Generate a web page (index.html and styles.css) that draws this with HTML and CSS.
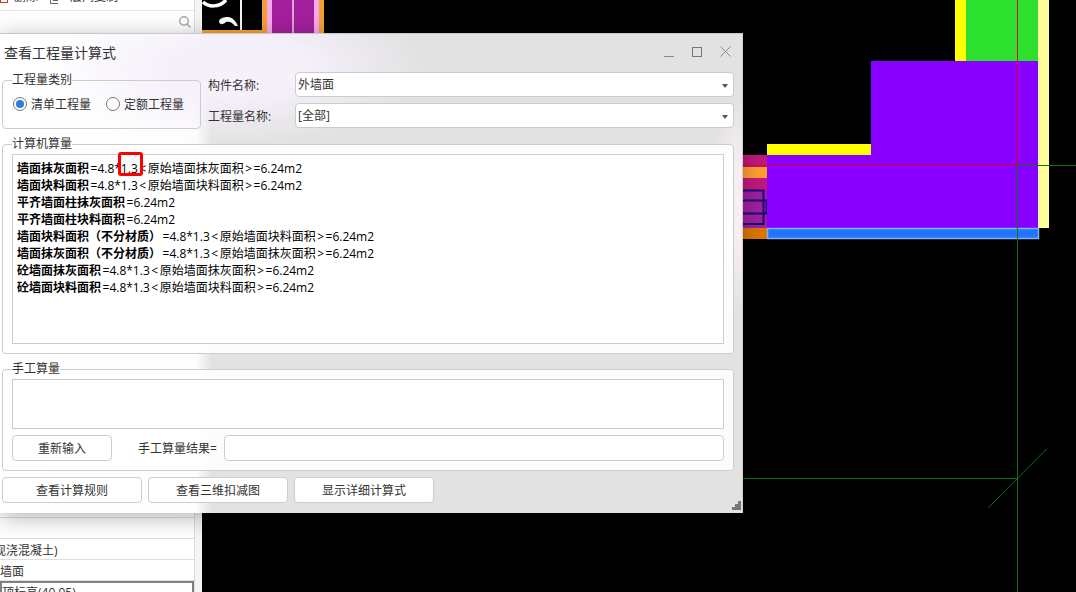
FILE: index.html
```html
<!DOCTYPE html>
<html lang="zh-CN">
<head>
    <meta charset="UTF-8">
    <title>查看工程量计算式</title>
    <link rel="stylesheet" href="styles.css">
</head>
<body>

<div class="app">
    <aside class="sidebar">
        <div class="toolbar">
            <svg class="tool-icon" width="9" height="9" viewBox="0 0 9 9" fill="none" stroke="#c0392b"><rect x="0.5" y="-5.5" width="7" height="8"/></svg>
            <span class="tool-text">删除</span>
            <svg class="tool-icon tool-icon-copy" width="9" height="9" viewBox="0 0 9 9" fill="none" stroke="#666"><path d="M0.5 -4V3.5H8M3 -5V0.5H8"/></svg>
            <span class="tool-text tool-text-copy">层间复制</span>
        </div>
        <div class="search">
            <svg width="14" height="14" viewBox="0 0 14 14" fill="none" stroke="#aaa" stroke-width="1.5">
                <circle cx="6" cy="6" r="4.2"/>
                <path d="M9.2 9.2L12.5 12.5"/>
            </svg>
        </div>
        <div class="side-spacer"></div>
        <div class="side-row side-row-blank"></div>
        <div class="side-row side-row-clip">现浇混凝土)</div>
        <div class="side-row">墙面</div>
        <div class="side-row side-row-active">顶标高(40.05)</div>
    </aside>

    <main class="canvas">
        <svg class="drawing" width="874" height="592" viewBox="202 0 874 592">
            <!-- top left bits -->
            <path d="M203 2C208 7 219 8 226 0" fill="none" stroke="#fff" stroke-width="3.5"/>
            <path d="M219 21C220 18 224 17 228 17C232 17 236 21 238 26L235 26C232 22 229 21 226 22C223 25 219 25 219 21Z" fill="#fff"/>
            <rect x="240" y="0" width="2" height="33" fill="#f4f4f4"/>
            <rect x="202" y="30" width="65" height="3" fill="#f4a030"/>
            <rect x="262" y="0" width="5" height="33" fill="#f4a030"/>
            <rect x="267" y="0" width="5" height="33" fill="#f8a8f0"/>
            <rect x="272" y="0" width="20" height="33" fill="#a31f9c"/>
            <rect x="292" y="0" width="2" height="33" fill="#e0a0d8"/>
            <rect x="294" y="0" width="20" height="33" fill="#a31f9c"/>
            <rect x="314" y="0" width="5" height="33" fill="#f8a8f0"/>
            <rect x="319" y="0" width="5" height="33" fill="#f4a030"/>

            <!-- wall stub beside the dialog -->
            <rect x="743" y="155" width="24" height="12" fill="#c0187f"/>
            <rect x="743" y="167" width="24" height="11" fill="#ffa030"/>
            <rect x="743" y="178" width="24" height="12" fill="#c0187f"/>
            <rect x="743" y="190" width="24" height="38" fill="#a020a0"/>
            <rect x="743" y="228" width="24" height="11" fill="#dd7700"/>
            <rect x="738" y="190.5" width="25.5" height="33.5" fill="none" stroke="#180a78" stroke-width="2"/>
            <rect x="738" y="200.5" width="28.5" height="13" fill="none" stroke="#180a78" stroke-width="2"/>

            <!-- walls -->
            <rect x="955" y="0" width="11" height="61" fill="#ffff00"/>
            <rect x="966" y="0" width="72" height="61" fill="#2ee02e"/>
            <rect x="1038" y="0" width="11" height="228" fill="#ffff99"/>
            <rect x="767" y="144" width="104" height="11" fill="#ffff00"/>
            <path d="M871 61H1038V228H767V155H871Z" fill="#8800ff"/>
            <rect x="767.5" y="228.5" width="271" height="10" fill="#2176ff" stroke="#86b0f2" stroke-width="1.5"/>

            <!-- axes -->
            <path d="M743 165.5H1017.5V0" fill="none" stroke="#e6002e"/>
            <path d="M1017.5 165V592M1017 165.5H1076" fill="none" stroke="#107010"/>
            <path d="M743 478.5H1017" fill="none" stroke="#0a700a" stroke-width="1.2"/>
            <path d="M988.5 507.5L1047 448.5" fill="none" stroke="#107010"/>
        </svg>
    </main>

    <section class="dialog">
        <header class="dialog-head">
            <h1 class="dialog-title">查看工程量计算式</h1>
            <div class="win-btns">
                <svg width="12" height="12" viewBox="0 0 12 12" stroke="#8a8a8a" fill="none"><path d="M0 10.5H10"/></svg>
                <svg width="12" height="12" viewBox="0 0 12 12" stroke="#777" fill="none"><rect x="0.5" y="1.5" width="9" height="9"/></svg>
                <svg width="12" height="12" viewBox="0 0 12 12" stroke="#8a8a8a" fill="none"><path d="M0.5 0.5L10.5 10.5M10.5 0.5L0.5 10.5"/></svg>
            </div>
        </header>

        <div class="top-row">
            <fieldset class="group group-type">
                <legend>工程量类别</legend>
                <div class="radios">
                    <span class="radio radio-on"></span><span class="radio-text">清单工程量</span>
                    <span class="radio radio-second"></span><span class="radio-text">定额工程量</span>
                </div>
            </fieldset>
            <div class="fields">
                <div class="field">
                    <label class="field-label">构件名称:</label>
                    <div class="combo">外墙面</div>
                </div>
                <div class="field">
                    <label class="field-label">工程量名称:</label>
                    <div class="combo">[全部]</div>
                </div>
            </div>
        </div>

        <fieldset class="group group-calc">
            <legend>计算机算量</legend>
            <div class="formula-box">
                <p><b>墙面抹灰面积</b>=4.8*1.3<i class="op">&lt;</i>原始墙面抹灰面积<i class="op">&gt;</i>=6.24m2</p>
                <p><b>墙面块料面积</b>=4.8*1.3<i class="op">&lt;</i>原始墙面块料面积<i class="op">&gt;</i>=6.24m2</p>
                <p><b>平齐墙面柱抹灰面积</b>=6.24m2</p>
                <p><b>平齐墙面柱块料面积</b>=6.24m2</p>
                <p><b>墙面块料面积（不分材质）</b>=4.8*1.3<i class="op">&lt;</i>原始墙面块料面积<i class="op">&gt;</i>=6.24m2</p>
                <p><b>墙面抹灰面积（不分材质）</b>=4.8*1.3<i class="op">&lt;</i>原始墙面抹灰面积<i class="op">&gt;</i>=6.24m2</p>
                <p><b>砼墙面抹灰面积</b>=4.8*1.3<i class="op">&lt;</i>原始墙面抹灰面积<i class="op">&gt;</i>=6.24m2</p>
                <p><b>砼墙面块料面积</b>=4.8*1.3<i class="op">&lt;</i>原始墙面块料面积<i class="op">&gt;</i>=6.24m2</p>
                <span class="mark"></span>
            </div>
        </fieldset>

        <fieldset class="group group-manual">
            <legend>手工算量</legend>
            <div class="manual-box"></div>
            <div class="manual-row">
                <button class="btn btn-redo">重新输入</button>
                <label class="manual-label">手工算量结果=</label>
                <div class="manual-input"></div>
            </div>
        </fieldset>

        <div class="actions">
            <button class="btn btn-wide">查看计算规则</button>
            <button class="btn btn-wide">查看三维扣减图</button>
            <button class="btn btn-wide">显示详细计算式</button>
        </div>

        <svg class="grip" width="9" height="9" viewBox="0 0 9 9" fill="#777">
            <rect x="6" y="0" width="3" height="3"/>
            <rect x="3" y="3" width="3" height="3"/>
            <rect x="6" y="3" width="3" height="3"/>
            <rect x="0" y="6" width="3" height="3"/>
            <rect x="3" y="6" width="3" height="3"/>
            <rect x="6" y="6" width="3" height="3"/>
        </svg>
    </section>
</div>

</body>
</html>
```

FILE: styles.css
```css
* {
    box-sizing: border-box;
}

html, body {
    margin: 0;
    height: 100%;
    overflow: hidden;
}

body {
    font-family: "Open Sans", "Noto Sans CJK SC", sans-serif;
    font-size: 12px;
    color: #333;
    background: #000;
}

.app {
    position: relative;
    display: flex;
    width: 1076px;
    height: 592px;
}

/* left panel, mostly hidden by the dialog */
.sidebar {
    display: flex;
    flex-direction: column;
    width: 202px;
    background: #fff;
    border-right: 7px solid #f5f5f5;
    box-shadow: inset -1px 0 #ddd;
    overflow: hidden;
}

.toolbar {
    display: flex;
    align-items: flex-start;
    height: 11px;
    border-bottom: 1px solid #e4e4e4;
    overflow: hidden;
}

.tool-icon {
    flex: none;
}

.tool-icon-copy {
    margin-left: 12px;
}

.tool-text {
    margin-left: 5px;
    margin-top: -13px;
    line-height: 20px;
}

.tool-text-copy {
    margin-left: 11px;
}

.search {
    display: flex;
    justify-content: flex-end;
    align-items: center;
    height: 22px;
    padding-right: 3px;
}

.side-spacer {
    flex: 1;
    border-bottom: 1px solid #ddd;
}

.side-row {
    height: 21px;
    line-height: 24px;
    border-bottom: 1px solid #ddd;
    margin-right: 1px;
    white-space: nowrap;
}

.side-row-blank {
    height: 21px;
}

.side-row-clip {
    text-indent: -6px;
}

.side-row-active {
    height: 11px;
    border: 2px solid #808080;
    border-bottom: none;
    line-height: 20px;
    overflow: hidden;
}

.canvas {
    flex: 1;
    background: #000;
}

.drawing {
    display: block;
}

/* dialog */
.dialog {
    position: absolute;
    left: 0;
    top: 33px;
    width: 743px;
    height: 480px;
    padding: 0 8px 0 2px;
    border-top: 1px solid #c8c8c8;
    border-right: 1px solid #cfcfcf;
    background:
        radial-gradient(ellipse 190px 75px at 235px 35px, #f6f0fb 35%, rgba(246, 240, 251, 0) 100%),
        radial-gradient(ellipse 30px 110px at 740px 170px, #f8eef4 30%, rgba(248, 238, 244, 0) 100%),
        linear-gradient(90deg, #fff 0, #fdfdfd 196px, #e2e2e2 212px);
    background-color: #e2e2e2;
    box-shadow: 0 4px 22px rgba(0, 0, 0, 0.3);
}

.dialog-head {
    display: flex;
    justify-content: space-between;
    align-items: center;
    height: 38px;
    margin-left: -2px;
    padding: 0 2px 2px 4px;
}

.dialog-title {
    margin: 0;
    font-size: 14px;
    font-weight: normal;
}

.win-btns {
    display: flex;
    gap: 16px;
}

.top-row {
    display: flex;
}

.group {
    margin: 0;
    padding: 2px 9px 0;
    border: 1px solid #ccc;
    border-radius: 4px;
    background: rgba(255, 255, 255, 0.88);
    min-width: 0;
}

.group legend {
    margin-left: 0;
    padding: 0;
    line-height: 16px;
    height: 16px;
}

.group-type {
    flex: none;
    width: 199px;
    height: 57px;
    background: none;
}

.radios {
    display: flex;
    align-items: center;
    margin-top: 5px;
    padding-left: 1px;
}

.radio {
    position: relative;
    width: 14px;
    height: 14px;
    margin-right: 4px;
    border: 1px solid #777;
    border-radius: 50%;
    background: #fff;
}

.radio-on::after {
    content: "";
    position: absolute;
    left: 2px;
    top: 2px;
    width: 8px;
    height: 8px;
    border-radius: 50%;
    background: #2b7de0;
}

.radio-second {
    margin-left: 15px;
}

.fields {
    flex: 1;
    display: flex;
    flex-direction: column;
    gap: 6px;
    margin-left: 7px;
}

.field {
    display: flex;
    align-items: center;
    height: 25px;
}

.field-label {
    flex: none;
    width: 87px;
    padding-top: 1px;
}

.combo {
    position: relative;
    flex: 1;
    height: 25px;
    padding-left: 2px;
    line-height: 24px;
    background: #fff;
    border: 1px solid #ccc;
    border-radius: 4px;
}

.combo::after {
    content: "";
    position: absolute;
    right: 5px;
    top: 11px;
    border: 3px solid transparent;
    border-top: 4px solid #555;
    border-bottom: none;
}

.group-calc {
    height: 218px;
    margin-top: 7px;
}

.formula-box {
    position: relative;
    height: 190px;
    padding: 5px 4px;
    color: #000;
    background: #fff;
    border: 1px solid #ccc;
}

.formula-box p {
    margin: 0;
    line-height: 17px;
    white-space: nowrap;
}

.formula-box b {
    margin-right: 1.5px;
}

.op {
    font-style: normal;
    padding: 0 1.5px;
}

.mark {
    position: absolute;
    left: 105px;
    top: -3px;
    width: 25px;
    height: 24px;
    border: 3px solid #f00;
    border-radius: 3px;
}

.group-manual {
    height: 110px;
    margin-top: 7px;
}

.manual-box {
    height: 50px;
    background: #fff;
    border: 1px solid #ccc;
}

.manual-row {
    display: flex;
    align-items: center;
    margin-top: 6px;
}

.manual-label {
    flex: none;
    width: 86px;
    margin-left: 26px;
    white-space: nowrap;
}

.manual-input {
    flex: 1;
    height: 26px;
    background: #fff;
    border: 1px solid #ccc;
    border-radius: 4px;
}

.btn {
    height: 26px;
    padding: 0;
    font: inherit;
    color: #333;
    background: #fff;
    border: 1px solid #ccc;
    border-radius: 4px;
}

.btn-redo {
    flex: none;
    width: 100px;
}

.btn-wide {
    width: 140px;
}

.actions {
    display: flex;
    gap: 6px;
    margin-top: 6px;
}

.grip {
    position: absolute;
    right: 1px;
    bottom: 3px;
}
```
